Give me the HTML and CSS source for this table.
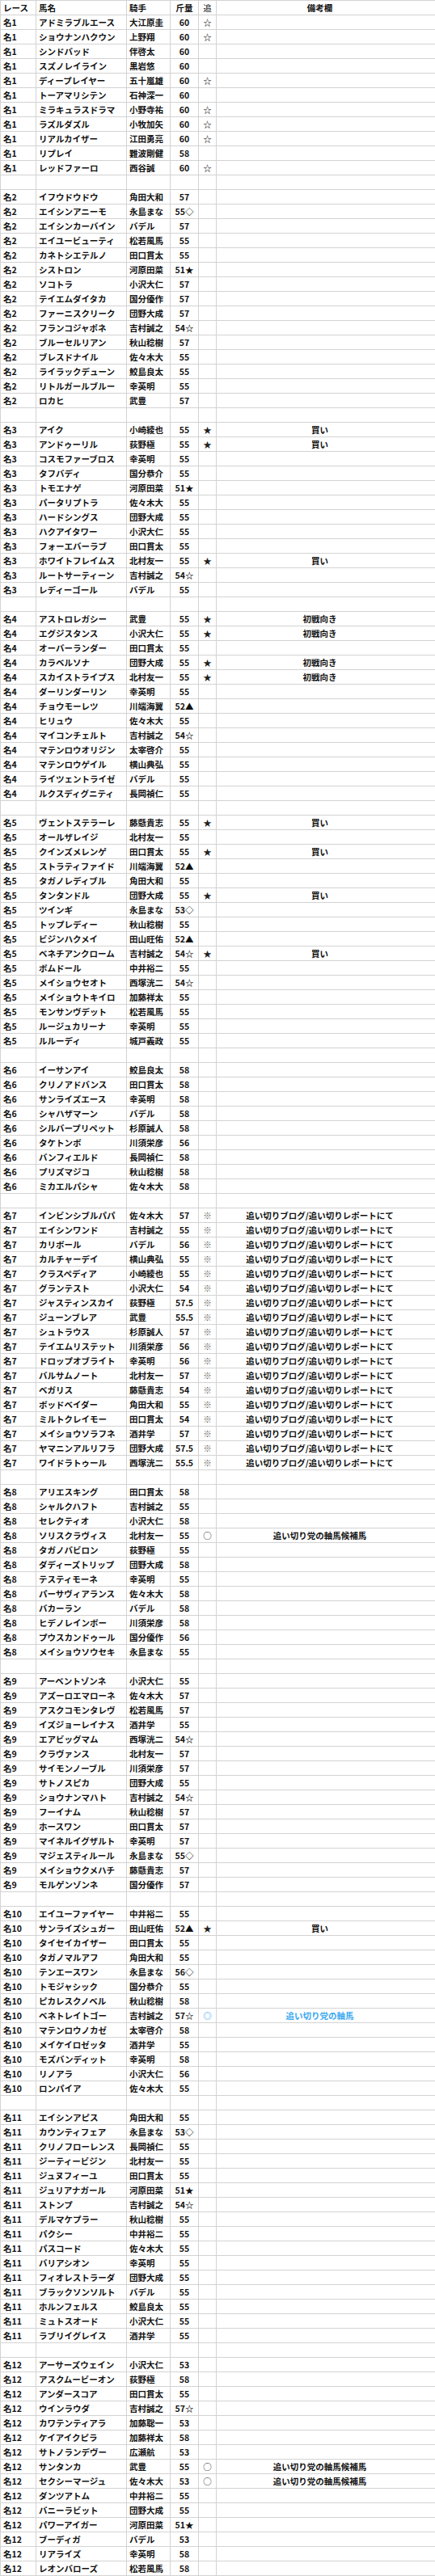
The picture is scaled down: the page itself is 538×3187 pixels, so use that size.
FILE: index.html
```html
<!DOCTYPE html>
<html lang="ja">
<head>
<meta charset="utf-8">
<title>追い切り</title>
<link rel="stylesheet" href="styles.css">
</head>
<body>
<table class="sheet">
<colgroup>
<col class="c-race"><col class="c-name"><col class="c-jockey"><col class="c-wt"><col class="c-mark"><col class="c-note">
</colgroup>
<thead>
<tr><th class="race">レース</th><th class="name">馬名</th><th class="jockey">騎手</th><th class="wt">斤量</th><th class="mark">追</th><th class="note">備考欄</th></tr>
</thead>
<tbody>
<tr><td class="race">名1</td><td class="name">アドミラブルエース</td><td class="jockey">大江原圭</td><td class="wt">60</td><td class="mark">☆</td><td class="note"></td></tr>
<tr><td class="race">名1</td><td class="name">ショウナンハクウン</td><td class="jockey">上野翔</td><td class="wt">60</td><td class="mark">☆</td><td class="note"></td></tr>
<tr><td class="race">名1</td><td class="name">シンドバッド</td><td class="jockey">伴啓太</td><td class="wt">60</td><td class="mark"></td><td class="note"></td></tr>
<tr><td class="race">名1</td><td class="name">スズノレイライン</td><td class="jockey">黒岩悠</td><td class="wt">60</td><td class="mark"></td><td class="note"></td></tr>
<tr><td class="race">名1</td><td class="name">ディープレイヤー</td><td class="jockey">五十嵐雄</td><td class="wt">60</td><td class="mark">☆</td><td class="note"></td></tr>
<tr><td class="race">名1</td><td class="name">トーアマリシテン</td><td class="jockey">石神深一</td><td class="wt">60</td><td class="mark"></td><td class="note"></td></tr>
<tr><td class="race">名1</td><td class="name">ミラキュラスドラマ</td><td class="jockey">小野寺祐</td><td class="wt">60</td><td class="mark">☆</td><td class="note"></td></tr>
<tr><td class="race">名1</td><td class="name">ラズルダズル</td><td class="jockey">小牧加矢</td><td class="wt">60</td><td class="mark">☆</td><td class="note"></td></tr>
<tr><td class="race">名1</td><td class="name">リアルカイザー</td><td class="jockey">江田勇亮</td><td class="wt">60</td><td class="mark">☆</td><td class="note"></td></tr>
<tr><td class="race">名1</td><td class="name">リプレイ</td><td class="jockey">難波剛健</td><td class="wt">58</td><td class="mark"></td><td class="note"></td></tr>
<tr><td class="race">名1</td><td class="name">レッドファーロ</td><td class="jockey">西谷誠</td><td class="wt">60</td><td class="mark">☆</td><td class="note"></td></tr>
<tr class="gap"><td></td><td></td><td></td><td></td><td></td><td></td></tr>
<tr><td class="race">名2</td><td class="name">イフウドウドウ</td><td class="jockey">角田大和</td><td class="wt">57</td><td class="mark"></td><td class="note"></td></tr>
<tr><td class="race">名2</td><td class="name">エイシンアニーモ</td><td class="jockey">永島まな</td><td class="wt">55◇</td><td class="mark"></td><td class="note"></td></tr>
<tr><td class="race">名2</td><td class="name">エイシンカーバイン</td><td class="jockey">バデル</td><td class="wt">57</td><td class="mark"></td><td class="note"></td></tr>
<tr><td class="race">名2</td><td class="name">エイユービューティ</td><td class="jockey">松若風馬</td><td class="wt">55</td><td class="mark"></td><td class="note"></td></tr>
<tr><td class="race">名2</td><td class="name">カネトシエテルノ</td><td class="jockey">田口貫太</td><td class="wt">55</td><td class="mark"></td><td class="note"></td></tr>
<tr><td class="race">名2</td><td class="name">シストロン</td><td class="jockey">河原田菜</td><td class="wt">51★</td><td class="mark"></td><td class="note"></td></tr>
<tr><td class="race">名2</td><td class="name">ソコトラ</td><td class="jockey">小沢大仁</td><td class="wt">57</td><td class="mark"></td><td class="note"></td></tr>
<tr><td class="race">名2</td><td class="name">テイエムダイタカ</td><td class="jockey">国分優作</td><td class="wt">57</td><td class="mark"></td><td class="note"></td></tr>
<tr><td class="race">名2</td><td class="name">ファーニスクリーク</td><td class="jockey">団野大成</td><td class="wt">57</td><td class="mark"></td><td class="note"></td></tr>
<tr><td class="race">名2</td><td class="name">フランコジャポネ</td><td class="jockey">吉村誠之</td><td class="wt">54☆</td><td class="mark"></td><td class="note"></td></tr>
<tr><td class="race">名2</td><td class="name">ブルーセルリアン</td><td class="jockey">秋山稔樹</td><td class="wt">57</td><td class="mark"></td><td class="note"></td></tr>
<tr><td class="race">名2</td><td class="name">ブレスドナイル</td><td class="jockey">佐々木大</td><td class="wt">55</td><td class="mark"></td><td class="note"></td></tr>
<tr><td class="race">名2</td><td class="name">ライラックデューン</td><td class="jockey">鮫島良太</td><td class="wt">55</td><td class="mark"></td><td class="note"></td></tr>
<tr><td class="race">名2</td><td class="name">リトルガールブルー</td><td class="jockey">幸英明</td><td class="wt">55</td><td class="mark"></td><td class="note"></td></tr>
<tr><td class="race">名2</td><td class="name">ロカヒ</td><td class="jockey">武豊</td><td class="wt">57</td><td class="mark"></td><td class="note"></td></tr>
<tr class="gap"><td></td><td></td><td></td><td></td><td></td><td></td></tr>
<tr><td class="race">名3</td><td class="name">アイク</td><td class="jockey">小崎綾也</td><td class="wt">55</td><td class="mark">★</td><td class="note">買い</td></tr>
<tr><td class="race">名3</td><td class="name">アンドゥーリル</td><td class="jockey">荻野極</td><td class="wt">55</td><td class="mark">★</td><td class="note">買い</td></tr>
<tr><td class="race">名3</td><td class="name">コスモファーブロス</td><td class="jockey">幸英明</td><td class="wt">55</td><td class="mark"></td><td class="note"></td></tr>
<tr><td class="race">名3</td><td class="name">タフバディ</td><td class="jockey">国分恭介</td><td class="wt">55</td><td class="mark"></td><td class="note"></td></tr>
<tr><td class="race">名3</td><td class="name">トモエナゲ</td><td class="jockey">河原田菜</td><td class="wt">51★</td><td class="mark"></td><td class="note"></td></tr>
<tr><td class="race">名3</td><td class="name">パータリプトラ</td><td class="jockey">佐々木大</td><td class="wt">55</td><td class="mark"></td><td class="note"></td></tr>
<tr><td class="race">名3</td><td class="name">ハードシングス</td><td class="jockey">団野大成</td><td class="wt">55</td><td class="mark"></td><td class="note"></td></tr>
<tr><td class="race">名3</td><td class="name">ハクアイタワー</td><td class="jockey">小沢大仁</td><td class="wt">55</td><td class="mark"></td><td class="note"></td></tr>
<tr><td class="race">名3</td><td class="name">フォーエバーラブ</td><td class="jockey">田口貫太</td><td class="wt">55</td><td class="mark"></td><td class="note"></td></tr>
<tr><td class="race">名3</td><td class="name">ホワイトフレイムス</td><td class="jockey">北村友一</td><td class="wt">55</td><td class="mark">★</td><td class="note">買い</td></tr>
<tr><td class="race">名3</td><td class="name">ルートサーティーン</td><td class="jockey">吉村誠之</td><td class="wt">54☆</td><td class="mark"></td><td class="note"></td></tr>
<tr><td class="race">名3</td><td class="name">レディーゴール</td><td class="jockey">バデル</td><td class="wt">55</td><td class="mark"></td><td class="note"></td></tr>
<tr class="gap"><td></td><td></td><td></td><td></td><td></td><td></td></tr>
<tr><td class="race">名4</td><td class="name">アストロレガシー</td><td class="jockey">武豊</td><td class="wt">55</td><td class="mark">★</td><td class="note">初戦向き</td></tr>
<tr><td class="race">名4</td><td class="name">エグジスタンス</td><td class="jockey">小沢大仁</td><td class="wt">55</td><td class="mark">★</td><td class="note">初戦向き</td></tr>
<tr><td class="race">名4</td><td class="name">オーバーランダー</td><td class="jockey">田口貫太</td><td class="wt">55</td><td class="mark"></td><td class="note"></td></tr>
<tr><td class="race">名4</td><td class="name">カラベルソナ</td><td class="jockey">団野大成</td><td class="wt">55</td><td class="mark">★</td><td class="note">初戦向き</td></tr>
<tr><td class="race">名4</td><td class="name">スカイストライプス</td><td class="jockey">北村友一</td><td class="wt">55</td><td class="mark">★</td><td class="note">初戦向き</td></tr>
<tr><td class="race">名4</td><td class="name">ダーリンダーリン</td><td class="jockey">幸英明</td><td class="wt">55</td><td class="mark"></td><td class="note"></td></tr>
<tr><td class="race">名4</td><td class="name">チョウモーレツ</td><td class="jockey">川端海翼</td><td class="wt">52▲</td><td class="mark"></td><td class="note"></td></tr>
<tr><td class="race">名4</td><td class="name">ヒリュウ</td><td class="jockey">佐々木大</td><td class="wt">55</td><td class="mark"></td><td class="note"></td></tr>
<tr><td class="race">名4</td><td class="name">マイコンチェルト</td><td class="jockey">吉村誠之</td><td class="wt">54☆</td><td class="mark"></td><td class="note"></td></tr>
<tr><td class="race">名4</td><td class="name">マテンロウオリジン</td><td class="jockey">太宰啓介</td><td class="wt">55</td><td class="mark"></td><td class="note"></td></tr>
<tr><td class="race">名4</td><td class="name">マテンロウゲイル</td><td class="jockey">横山典弘</td><td class="wt">55</td><td class="mark"></td><td class="note"></td></tr>
<tr><td class="race">名4</td><td class="name">ライツェントライゼ</td><td class="jockey">バデル</td><td class="wt">55</td><td class="mark"></td><td class="note"></td></tr>
<tr><td class="race">名4</td><td class="name">ルクスディグニティ</td><td class="jockey">長岡禎仁</td><td class="wt">55</td><td class="mark"></td><td class="note"></td></tr>
<tr class="gap"><td></td><td></td><td></td><td></td><td></td><td></td></tr>
<tr><td class="race">名5</td><td class="name">ヴェントステラーレ</td><td class="jockey">藤懸貴志</td><td class="wt">55</td><td class="mark">★</td><td class="note">買い</td></tr>
<tr><td class="race">名5</td><td class="name">オールザレイジ</td><td class="jockey">北村友一</td><td class="wt">55</td><td class="mark"></td><td class="note"></td></tr>
<tr><td class="race">名5</td><td class="name">クインズメレンゲ</td><td class="jockey">田口貫太</td><td class="wt">55</td><td class="mark">★</td><td class="note">買い</td></tr>
<tr><td class="race">名5</td><td class="name">ストラティファイド</td><td class="jockey">川端海翼</td><td class="wt">52▲</td><td class="mark"></td><td class="note"></td></tr>
<tr><td class="race">名5</td><td class="name">タガノレディブル</td><td class="jockey">角田大和</td><td class="wt">55</td><td class="mark"></td><td class="note"></td></tr>
<tr><td class="race">名5</td><td class="name">タンタンドル</td><td class="jockey">団野大成</td><td class="wt">55</td><td class="mark">★</td><td class="note">買い</td></tr>
<tr><td class="race">名5</td><td class="name">ツインギ</td><td class="jockey">永島まな</td><td class="wt">53◇</td><td class="mark"></td><td class="note"></td></tr>
<tr><td class="race">名5</td><td class="name">トップレディー</td><td class="jockey">秋山稔樹</td><td class="wt">55</td><td class="mark"></td><td class="note"></td></tr>
<tr><td class="race">名5</td><td class="name">ビジンハクメイ</td><td class="jockey">田山旺佑</td><td class="wt">52▲</td><td class="mark"></td><td class="note"></td></tr>
<tr><td class="race">名5</td><td class="name">ベネチアンクローム</td><td class="jockey">吉村誠之</td><td class="wt">54☆</td><td class="mark">★</td><td class="note">買い</td></tr>
<tr><td class="race">名5</td><td class="name">ボムドール</td><td class="jockey">中井裕二</td><td class="wt">55</td><td class="mark"></td><td class="note"></td></tr>
<tr><td class="race">名5</td><td class="name">メイショウセオト</td><td class="jockey">西塚洸二</td><td class="wt">54☆</td><td class="mark"></td><td class="note"></td></tr>
<tr><td class="race">名5</td><td class="name">メイショウトキイロ</td><td class="jockey">加藤祥太</td><td class="wt">55</td><td class="mark"></td><td class="note"></td></tr>
<tr><td class="race">名5</td><td class="name">モンサンヴデット</td><td class="jockey">松若風馬</td><td class="wt">55</td><td class="mark"></td><td class="note"></td></tr>
<tr><td class="race">名5</td><td class="name">ルージュカリーナ</td><td class="jockey">幸英明</td><td class="wt">55</td><td class="mark"></td><td class="note"></td></tr>
<tr><td class="race">名5</td><td class="name">ルルーディ</td><td class="jockey">城戸義政</td><td class="wt">55</td><td class="mark"></td><td class="note"></td></tr>
<tr class="gap"><td></td><td></td><td></td><td></td><td></td><td></td></tr>
<tr><td class="race">名6</td><td class="name">イーサンアイ</td><td class="jockey">鮫島良太</td><td class="wt">58</td><td class="mark"></td><td class="note"></td></tr>
<tr><td class="race">名6</td><td class="name">クリノアドバンス</td><td class="jockey">田口貫太</td><td class="wt">58</td><td class="mark"></td><td class="note"></td></tr>
<tr><td class="race">名6</td><td class="name">サンライズエース</td><td class="jockey">幸英明</td><td class="wt">58</td><td class="mark"></td><td class="note"></td></tr>
<tr><td class="race">名6</td><td class="name">シャハザマーン</td><td class="jockey">バデル</td><td class="wt">58</td><td class="mark"></td><td class="note"></td></tr>
<tr><td class="race">名6</td><td class="name">シルバープリペット</td><td class="jockey">杉原誠人</td><td class="wt">58</td><td class="mark"></td><td class="note"></td></tr>
<tr><td class="race">名6</td><td class="name">タケトンボ</td><td class="jockey">川須栄彦</td><td class="wt">56</td><td class="mark"></td><td class="note"></td></tr>
<tr><td class="race">名6</td><td class="name">バンフィエルド</td><td class="jockey">長岡禎仁</td><td class="wt">58</td><td class="mark"></td><td class="note"></td></tr>
<tr><td class="race">名6</td><td class="name">プリズマジコ</td><td class="jockey">秋山稔樹</td><td class="wt">58</td><td class="mark"></td><td class="note"></td></tr>
<tr><td class="race">名6</td><td class="name">ミカエルパシャ</td><td class="jockey">佐々木大</td><td class="wt">58</td><td class="mark"></td><td class="note"></td></tr>
<tr class="gap"><td></td><td></td><td></td><td></td><td></td><td></td></tr>
<tr><td class="race">名7</td><td class="name">インビンシブルパパ</td><td class="jockey">佐々木大</td><td class="wt">57</td><td class="mark ref">※</td><td class="note">追い切りブログ/追い切りレポートにて</td></tr>
<tr><td class="race">名7</td><td class="name">エイシンワンド</td><td class="jockey">吉村誠之</td><td class="wt">55</td><td class="mark ref">※</td><td class="note">追い切りブログ/追い切りレポートにて</td></tr>
<tr><td class="race">名7</td><td class="name">カリボール</td><td class="jockey">バデル</td><td class="wt">56</td><td class="mark ref">※</td><td class="note">追い切りブログ/追い切りレポートにて</td></tr>
<tr><td class="race">名7</td><td class="name">カルチャーデイ</td><td class="jockey">横山典弘</td><td class="wt">55</td><td class="mark ref">※</td><td class="note">追い切りブログ/追い切りレポートにて</td></tr>
<tr><td class="race">名7</td><td class="name">クラスペディア</td><td class="jockey">小崎綾也</td><td class="wt">55</td><td class="mark ref">※</td><td class="note">追い切りブログ/追い切りレポートにて</td></tr>
<tr><td class="race">名7</td><td class="name">グランテスト</td><td class="jockey">小沢大仁</td><td class="wt">54</td><td class="mark ref">※</td><td class="note">追い切りブログ/追い切りレポートにて</td></tr>
<tr><td class="race">名7</td><td class="name">ジャスティンスカイ</td><td class="jockey">荻野極</td><td class="wt">57.5</td><td class="mark ref">※</td><td class="note">追い切りブログ/追い切りレポートにて</td></tr>
<tr><td class="race">名7</td><td class="name">ジューンブレア</td><td class="jockey">武豊</td><td class="wt">55.5</td><td class="mark ref">※</td><td class="note">追い切りブログ/追い切りレポートにて</td></tr>
<tr><td class="race">名7</td><td class="name">シュトラウス</td><td class="jockey">杉原誠人</td><td class="wt">57</td><td class="mark ref">※</td><td class="note">追い切りブログ/追い切りレポートにて</td></tr>
<tr><td class="race">名7</td><td class="name">テイエムリステット</td><td class="jockey">川須栄彦</td><td class="wt">56</td><td class="mark ref">※</td><td class="note">追い切りブログ/追い切りレポートにて</td></tr>
<tr><td class="race">名7</td><td class="name">ドロップオブライト</td><td class="jockey">幸英明</td><td class="wt">56</td><td class="mark ref">※</td><td class="note">追い切りブログ/追い切りレポートにて</td></tr>
<tr><td class="race">名7</td><td class="name">バルサムノート</td><td class="jockey">北村友一</td><td class="wt">57</td><td class="mark ref">※</td><td class="note">追い切りブログ/追い切りレポートにて</td></tr>
<tr><td class="race">名7</td><td class="name">ベガリス</td><td class="jockey">藤懸貴志</td><td class="wt">54</td><td class="mark ref">※</td><td class="note">追い切りブログ/追い切りレポートにて</td></tr>
<tr><td class="race">名7</td><td class="name">ボッドベイダー</td><td class="jockey">角田大和</td><td class="wt">55</td><td class="mark ref">※</td><td class="note">追い切りブログ/追い切りレポートにて</td></tr>
<tr><td class="race">名7</td><td class="name">ミルトクレイモー</td><td class="jockey">田口貫太</td><td class="wt">54</td><td class="mark ref">※</td><td class="note">追い切りブログ/追い切りレポートにて</td></tr>
<tr><td class="race">名7</td><td class="name">メイショウソラフネ</td><td class="jockey">酒井学</td><td class="wt">57</td><td class="mark ref">※</td><td class="note">追い切りブログ/追い切りレポートにて</td></tr>
<tr><td class="race">名7</td><td class="name">ヤマニンアルリフラ</td><td class="jockey">団野大成</td><td class="wt">57.5</td><td class="mark ref">※</td><td class="note">追い切りブログ/追い切りレポートにて</td></tr>
<tr><td class="race">名7</td><td class="name">ワイドラトゥール</td><td class="jockey">西塚洸二</td><td class="wt">55.5</td><td class="mark ref">※</td><td class="note">追い切りブログ/追い切りレポートにて</td></tr>
<tr class="gap"><td></td><td></td><td></td><td></td><td></td><td></td></tr>
<tr><td class="race">名8</td><td class="name">アリエスキング</td><td class="jockey">田口貫太</td><td class="wt">58</td><td class="mark"></td><td class="note"></td></tr>
<tr><td class="race">名8</td><td class="name">シャルクハフト</td><td class="jockey">吉村誠之</td><td class="wt">55</td><td class="mark"></td><td class="note"></td></tr>
<tr><td class="race">名8</td><td class="name">セレクティオ</td><td class="jockey">小沢大仁</td><td class="wt">58</td><td class="mark"></td><td class="note"></td></tr>
<tr><td class="race">名8</td><td class="name">ソリスクラヴィス</td><td class="jockey">北村友一</td><td class="wt">55</td><td class="mark ring">○</td><td class="note">追い切り党の軸馬候補馬</td></tr>
<tr><td class="race">名8</td><td class="name">タガノバビロン</td><td class="jockey">荻野極</td><td class="wt">55</td><td class="mark"></td><td class="note"></td></tr>
<tr><td class="race">名8</td><td class="name">ダディーズトリップ</td><td class="jockey">団野大成</td><td class="wt">58</td><td class="mark"></td><td class="note"></td></tr>
<tr><td class="race">名8</td><td class="name">テスティモーネ</td><td class="jockey">幸英明</td><td class="wt">55</td><td class="mark"></td><td class="note"></td></tr>
<tr><td class="race">名8</td><td class="name">パーサヴィアランス</td><td class="jockey">佐々木大</td><td class="wt">58</td><td class="mark"></td><td class="note"></td></tr>
<tr><td class="race">名8</td><td class="name">バカーラン</td><td class="jockey">バデル</td><td class="wt">58</td><td class="mark"></td><td class="note"></td></tr>
<tr><td class="race">名8</td><td class="name">ヒデノレインボー</td><td class="jockey">川須栄彦</td><td class="wt">58</td><td class="mark"></td><td class="note"></td></tr>
<tr><td class="race">名8</td><td class="name">プウスカンドゥール</td><td class="jockey">国分優作</td><td class="wt">56</td><td class="mark"></td><td class="note"></td></tr>
<tr><td class="race">名8</td><td class="name">メイショウソウセキ</td><td class="jockey">永島まな</td><td class="wt">55</td><td class="mark"></td><td class="note"></td></tr>
<tr class="gap"><td></td><td></td><td></td><td></td><td></td><td></td></tr>
<tr><td class="race">名9</td><td class="name">アーベントゾンネ</td><td class="jockey">小沢大仁</td><td class="wt">55</td><td class="mark"></td><td class="note"></td></tr>
<tr><td class="race">名9</td><td class="name">アズーロエマローネ</td><td class="jockey">佐々木大</td><td class="wt">57</td><td class="mark"></td><td class="note"></td></tr>
<tr><td class="race">名9</td><td class="name">アスクコモンタレヴ</td><td class="jockey">松若風馬</td><td class="wt">57</td><td class="mark"></td><td class="note"></td></tr>
<tr><td class="race">名9</td><td class="name">イズジョーレイナス</td><td class="jockey">酒井学</td><td class="wt">55</td><td class="mark"></td><td class="note"></td></tr>
<tr><td class="race">名9</td><td class="name">エアビッグマム</td><td class="jockey">西塚洸二</td><td class="wt">54☆</td><td class="mark"></td><td class="note"></td></tr>
<tr><td class="race">名9</td><td class="name">クラヴァンス</td><td class="jockey">北村友一</td><td class="wt">57</td><td class="mark"></td><td class="note"></td></tr>
<tr><td class="race">名9</td><td class="name">サイモンノーブル</td><td class="jockey">川須栄彦</td><td class="wt">57</td><td class="mark"></td><td class="note"></td></tr>
<tr><td class="race">名9</td><td class="name">サトノスピカ</td><td class="jockey">団野大成</td><td class="wt">55</td><td class="mark"></td><td class="note"></td></tr>
<tr><td class="race">名9</td><td class="name">ショウナンマハト</td><td class="jockey">吉村誠之</td><td class="wt">54☆</td><td class="mark"></td><td class="note"></td></tr>
<tr><td class="race">名9</td><td class="name">フーイナム</td><td class="jockey">秋山稔樹</td><td class="wt">57</td><td class="mark"></td><td class="note"></td></tr>
<tr><td class="race">名9</td><td class="name">ホースワン</td><td class="jockey">田口貫太</td><td class="wt">57</td><td class="mark"></td><td class="note"></td></tr>
<tr><td class="race">名9</td><td class="name">マイネルイグザルト</td><td class="jockey">幸英明</td><td class="wt">57</td><td class="mark"></td><td class="note"></td></tr>
<tr><td class="race">名9</td><td class="name">マジェスティルール</td><td class="jockey">永島まな</td><td class="wt">55◇</td><td class="mark"></td><td class="note"></td></tr>
<tr><td class="race">名9</td><td class="name">メイショウクメハチ</td><td class="jockey">藤懸貴志</td><td class="wt">57</td><td class="mark"></td><td class="note"></td></tr>
<tr><td class="race">名9</td><td class="name">モルゲンゾンネ</td><td class="jockey">国分優作</td><td class="wt">57</td><td class="mark"></td><td class="note"></td></tr>
<tr class="gap"><td></td><td></td><td></td><td></td><td></td><td></td></tr>
<tr><td class="race">名10</td><td class="name">エイユーファイヤー</td><td class="jockey">中井裕二</td><td class="wt">55</td><td class="mark"></td><td class="note"></td></tr>
<tr><td class="race">名10</td><td class="name">サンライズシュガー</td><td class="jockey">田山旺佑</td><td class="wt">52▲</td><td class="mark">★</td><td class="note">買い</td></tr>
<tr><td class="race">名10</td><td class="name">タイセイカイザー</td><td class="jockey">田口貫太</td><td class="wt">55</td><td class="mark"></td><td class="note"></td></tr>
<tr><td class="race">名10</td><td class="name">タガノマルアフ</td><td class="jockey">角田大和</td><td class="wt">55</td><td class="mark"></td><td class="note"></td></tr>
<tr><td class="race">名10</td><td class="name">テンエースワン</td><td class="jockey">永島まな</td><td class="wt">56◇</td><td class="mark"></td><td class="note"></td></tr>
<tr><td class="race">名10</td><td class="name">トモジャシック</td><td class="jockey">国分恭介</td><td class="wt">55</td><td class="mark"></td><td class="note"></td></tr>
<tr><td class="race">名10</td><td class="name">ピカレスクノベル</td><td class="jockey">秋山稔樹</td><td class="wt">58</td><td class="mark"></td><td class="note"></td></tr>
<tr class="pick"><td class="race">名10</td><td class="name">ベネトレイトゴー</td><td class="jockey">吉村誠之</td><td class="wt">57☆</td><td class="mark">◎</td><td class="note">追い切り党の軸馬</td></tr>
<tr><td class="race">名10</td><td class="name">マテンロウノカゼ</td><td class="jockey">太宰啓介</td><td class="wt">58</td><td class="mark"></td><td class="note"></td></tr>
<tr><td class="race">名10</td><td class="name">メイケイロゼッタ</td><td class="jockey">酒井学</td><td class="wt">55</td><td class="mark"></td><td class="note"></td></tr>
<tr><td class="race">名10</td><td class="name">モズバンディット</td><td class="jockey">幸英明</td><td class="wt">58</td><td class="mark"></td><td class="note"></td></tr>
<tr><td class="race">名10</td><td class="name">リノアラ</td><td class="jockey">小沢大仁</td><td class="wt">56</td><td class="mark"></td><td class="note"></td></tr>
<tr><td class="race">名10</td><td class="name">ロンパイア</td><td class="jockey">佐々木大</td><td class="wt">55</td><td class="mark"></td><td class="note"></td></tr>
<tr class="gap"><td></td><td></td><td></td><td></td><td></td><td></td></tr>
<tr><td class="race">名11</td><td class="name">エイシンアピス</td><td class="jockey">角田大和</td><td class="wt">55</td><td class="mark"></td><td class="note"></td></tr>
<tr><td class="race">名11</td><td class="name">カウンティフェア</td><td class="jockey">永島まな</td><td class="wt">53◇</td><td class="mark"></td><td class="note"></td></tr>
<tr><td class="race">名11</td><td class="name">クリノフローレンス</td><td class="jockey">長岡禎仁</td><td class="wt">55</td><td class="mark"></td><td class="note"></td></tr>
<tr><td class="race">名11</td><td class="name">ジーティービジン</td><td class="jockey">北村友一</td><td class="wt">55</td><td class="mark"></td><td class="note"></td></tr>
<tr><td class="race">名11</td><td class="name">ジュヌフィーユ</td><td class="jockey">田口貫太</td><td class="wt">55</td><td class="mark"></td><td class="note"></td></tr>
<tr><td class="race">名11</td><td class="name">ジュリアナガール</td><td class="jockey">河原田菜</td><td class="wt">51★</td><td class="mark"></td><td class="note"></td></tr>
<tr><td class="race">名11</td><td class="name">ストンプ</td><td class="jockey">吉村誠之</td><td class="wt">54☆</td><td class="mark"></td><td class="note"></td></tr>
<tr><td class="race">名11</td><td class="name">デルマケプラー</td><td class="jockey">秋山稔樹</td><td class="wt">55</td><td class="mark"></td><td class="note"></td></tr>
<tr><td class="race">名11</td><td class="name">パクシー</td><td class="jockey">中井裕二</td><td class="wt">55</td><td class="mark"></td><td class="note"></td></tr>
<tr><td class="race">名11</td><td class="name">パスコード</td><td class="jockey">佐々木大</td><td class="wt">55</td><td class="mark"></td><td class="note"></td></tr>
<tr><td class="race">名11</td><td class="name">バリアシオン</td><td class="jockey">幸英明</td><td class="wt">55</td><td class="mark"></td><td class="note"></td></tr>
<tr><td class="race">名11</td><td class="name">フィオレストラーダ</td><td class="jockey">団野大成</td><td class="wt">55</td><td class="mark"></td><td class="note"></td></tr>
<tr><td class="race">名11</td><td class="name">ブラックソンソルト</td><td class="jockey">バデル</td><td class="wt">55</td><td class="mark"></td><td class="note"></td></tr>
<tr><td class="race">名11</td><td class="name">ホルンフェルス</td><td class="jockey">鮫島良太</td><td class="wt">55</td><td class="mark"></td><td class="note"></td></tr>
<tr><td class="race">名11</td><td class="name">ミュトスオード</td><td class="jockey">小沢大仁</td><td class="wt">55</td><td class="mark"></td><td class="note"></td></tr>
<tr><td class="race">名11</td><td class="name">ラブリイグレイス</td><td class="jockey">酒井学</td><td class="wt">55</td><td class="mark"></td><td class="note"></td></tr>
<tr class="gap"><td></td><td></td><td></td><td></td><td></td><td></td></tr>
<tr><td class="race">名12</td><td class="name">アーサーズウェイン</td><td class="jockey">小沢大仁</td><td class="wt">53</td><td class="mark"></td><td class="note"></td></tr>
<tr><td class="race">名12</td><td class="name">アスクムービーオン</td><td class="jockey">荻野極</td><td class="wt">58</td><td class="mark"></td><td class="note"></td></tr>
<tr><td class="race">名12</td><td class="name">アンダースコア</td><td class="jockey">田口貫太</td><td class="wt">55</td><td class="mark"></td><td class="note"></td></tr>
<tr><td class="race">名12</td><td class="name">ウインラウダ</td><td class="jockey">吉村誠之</td><td class="wt">57☆</td><td class="mark"></td><td class="note"></td></tr>
<tr><td class="race">名12</td><td class="name">カワテンティアラ</td><td class="jockey">加藤聡一</td><td class="wt">53</td><td class="mark"></td><td class="note"></td></tr>
<tr><td class="race">名12</td><td class="name">ケイアイクピラ</td><td class="jockey">加藤祥太</td><td class="wt">58</td><td class="mark"></td><td class="note"></td></tr>
<tr><td class="race">名12</td><td class="name">サトノランデヴー</td><td class="jockey">広瀬航</td><td class="wt">53</td><td class="mark"></td><td class="note"></td></tr>
<tr><td class="race">名12</td><td class="name">サンタンカ</td><td class="jockey">武豊</td><td class="wt">55</td><td class="mark ring">○</td><td class="note">追い切り党の軸馬候補馬</td></tr>
<tr><td class="race">名12</td><td class="name">セクシーマージュ</td><td class="jockey">佐々木大</td><td class="wt">53</td><td class="mark ring">○</td><td class="note">追い切り党の軸馬候補馬</td></tr>
<tr><td class="race">名12</td><td class="name">ダンツアトム</td><td class="jockey">中井裕二</td><td class="wt">55</td><td class="mark"></td><td class="note"></td></tr>
<tr><td class="race">名12</td><td class="name">バニーラビット</td><td class="jockey">団野大成</td><td class="wt">55</td><td class="mark"></td><td class="note"></td></tr>
<tr><td class="race">名12</td><td class="name">パワーアイガー</td><td class="jockey">河原田菜</td><td class="wt">51★</td><td class="mark"></td><td class="note"></td></tr>
<tr><td class="race">名12</td><td class="name">ブーディガ</td><td class="jockey">バデル</td><td class="wt">53</td><td class="mark"></td><td class="note"></td></tr>
<tr><td class="race">名12</td><td class="name">リアライズ</td><td class="jockey">幸英明</td><td class="wt">58</td><td class="mark"></td><td class="note"></td></tr>
<tr><td class="race">名12</td><td class="name">レオンバローズ</td><td class="jockey">松若風馬</td><td class="wt">58</td><td class="mark"></td><td class="note"></td></tr>
</tbody>
</table>
</body>
</html>
```

FILE: styles.css
```css
html, body {
  margin: 0;
  padding: 0;
  background: #ffffff;
}

body {
  font-family: "Noto Sans CJK JP", "Noto Sans", sans-serif;
  font-size: 10.5px;
  font-weight: 700;
  color: #111111;
}

.sheet {
  border-collapse: collapse;
  table-layout: fixed;
  width: 538px;
}

.c-race { width: 44px; }
.c-name { width: 112px; }
.c-jockey { width: 54px; }
.c-wt { width: 35px; }
.c-mark { width: 22px; }
.c-note { width: 271px; }

.sheet tr {
  height: 18px;
}

.sheet th,
.sheet td {
  border: 1px solid #d3d3d3;
  padding: 0 0 0 3px;
  line-height: 16px;
  white-space: nowrap;
  overflow: hidden;
  text-align: left;
  font-weight: 700;
}

.sheet .wt,
.sheet .mark {
  text-align: center;
  padding: 0;
}

.sheet .mark {
  font-weight: 400;
  color: #222222;
}

.sheet .ref {
  color: #555555;
}

.sheet .note {
  text-align: center;
  padding: 0 15px 0 0;
}

.sheet th.note,
.sheet th.wt {
  font-weight: 700;
}

.sheet .pick .mark,
.sheet .pick .note {
  color: #3aa8ef;
}
```
